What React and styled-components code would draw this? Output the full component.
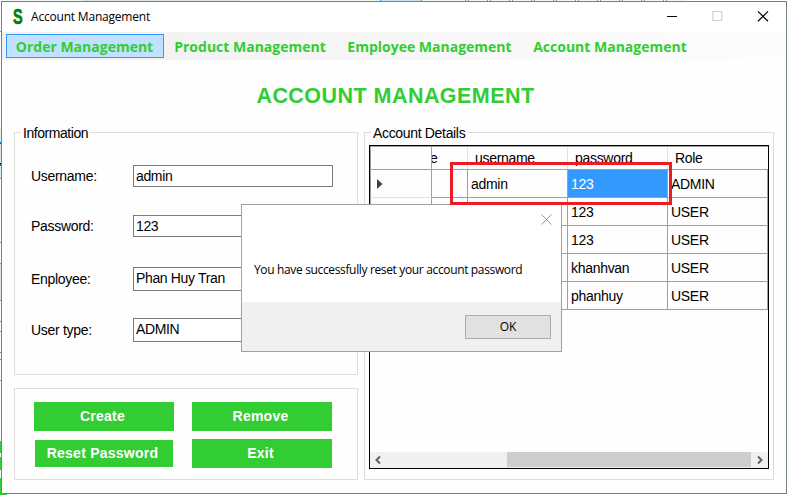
import React from 'react';
import styled, { createGlobalStyle } from 'styled-components';

const GREEN = '#32cd32';
const sans = '"Liberation Sans", Arial, sans-serif';
const humanist = '"Open Sans", "Noto Sans", sans-serif';

const GlobalStyle = createGlobalStyle`
  *, *::before, *::after { box-sizing: border-box; }
  body { margin: 0; background: #fff; color: #000; font: 14px/16px ${sans}; overflow: hidden; }
`;

/* Whatever is open behind the window shows as a one pixel rim. */
const Desktop = styled.div`
  width: 788px;
  height: 495px;
  padding: 1px;
  background:
    linear-gradient(90deg, #f4f8f4 0 82px, #dde3dd 82px 239px, #f1f6f1 239px 380px, #3c96dc 380px 381px, #cce4f7 381px 421px, #3c96dc 421px 422px, #f1f6f1 422px 465px, transparent 465px) 0 0 / 788px 1px no-repeat,
    repeating-linear-gradient(90deg, #8a938a 0 1px, #f1f6f1 1px 3px, #8a938a 3px 4px, #f1f6f1 4px 22px) 465px 0 / 220px 1px no-repeat,
    linear-gradient(${GREEN}, ${GREEN}) 0 494px / 7px 1px no-repeat,
    linear-gradient(180deg, #fff 0 31px, #8a938a 31px 32px, #fff 32px 129px, #e5e8e5 129px 142px, #0078d7 142px 144px, #e0e3e0 144px 163px, #000 163px 164px, #0078d7 164px 166px, #e5e8e5 166px 178px, #8a938a 178px 179px, #fff 179px 242px, #8a938a 242px 243px, #fff 243px 263px, #8a938a 263px 264px, #e0e3e0 264px 300px, #8a938a 300px 301px, #fff 301px 321px, #8a938a 321px 322px, #fff 322px 331px, #8a938a 331px 332px, #fff 332px 352px, #8a938a 352px 353px, #fff 353px 359px, #8a938a 359px 360px, #fff 360px 380px, #8a938a 380px 381px, #fff 381px 441px, ${GREEN} 441px 453px, #fff 453px 457px, ${GREEN} 457px 470px, #fff 470px 478px, ${GREEN} 478px) 0 0 / 1px 495px no-repeat,
    #fff;
`;

const Window = styled.main`
  position: relative;
  width: 786px;
  height: 493px;
  border: 1px solid #728572;
  background: #fefefe;
`;

const TitleBar = styled.header`
  display: flex;
  align-items: center;
  height: 30px;
  padding-left: 11px;
  background: #fff;
`;

const Logo = styled.span`
  width: 12px;
  height: 22px;
  margin-right: 6px;
  color: #008000;
  font: bold 22px/22px ${sans};
  -webkit-text-stroke: 0.6px #008000;
  transform: scaleX(0.66);
  transform-origin: 0 50%;
`;

const Caption = styled.span`
  flex: 1;
  font: 12px/16px ${humanist};
  letter-spacing: -0.2px;
`;

const WindowButtons = styled.div`
  display: flex;
  width: 137px;
  height: 30px;

  svg { width: 45.67px; height: 30px; }
`;

const MenuBar = styled.nav`
  display: flex;
  height: 28px;
  padding: 2px 0 2px 4px;
  background: linear-gradient(90deg, #f0f0f0, #fdfdfd);
`;

const MenuItem = styled.div`
  width: ${(p) => p.$width}px;
  padding-right: 1px;
  border: 1px solid ${(p) => (p.$active ? '#3399ff' : 'transparent')};
  background: ${(p) => (p.$active ? '#c2e0ff' : 'transparent')};
  color: ${GREEN};
  font: bold 14px/24px ${humanist};
  text-align: center;
  white-space: nowrap;
`;

const Heading = styled.h1`
  height: 72px;
  margin: 0;
  padding-left: 3px;
  color: ${GREEN};
  font: bold 21.5px/72px ${sans};
  letter-spacing: 0.46px;
  text-align: center;
`;

const Columns = styled.div`
  display: flex;
  gap: 6px;
  padding-left: 12px;
`;

const LeftColumn = styled.div`
  display: flex;
  flex-direction: column;
  gap: 13px;
`;

const Group = styled.section`
  position: relative;
  width: ${(p) => p.$width}px;
  height: ${(p) => p.$height}px;
  border: 1px solid #dcdcdc;
`;

const Legend = styled.span`
  position: absolute;
  top: -8px;
  left: 6px;
  padding: 0 2px;
  background: #fefefe;
  white-space: nowrap;
  letter-spacing: ${(p) => p.$track}px;
`;

const Form = styled.div`
  padding: 32px 0 0 16px;
`;

const Field = styled.label`
  display: flex;
  align-items: center;
  height: ${(p) => p.$height}px;
  margin-bottom: ${(p) => p.$after}px;
`;

const FieldName = styled.span`
  width: 102px;
  letter-spacing: -0.3px;
`;

const FieldValue = styled.span`
  width: 200px;
  height: 100%;
  padding-left: 2px;
  border: 1px solid #7a7a7a;
  background: #fff;
  line-height: 20px;
  letter-spacing: -0.35px;
`;

const Actions = styled.div`
  display: grid;
  grid-template: 29px 29px / 140px 140px;
  gap: 8px 18px;
  place-items: center;
  padding: 13px 0 0 19px;
`;

const ActionButton = styled.button`
  width: ${(p) => (p.$compact ? 138 : 140)}px;
  height: ${(p) => (p.$compact ? 27 : 29)}px;
  padding: 0 3px 1px 0;
  border: 0;
  background: ${GREEN};
  color: #fff;
  font: bold 14px/16px ${sans};
  letter-spacing: 0.25px;
`;

const Grid = styled.div`
  display: flex;
  flex-direction: column;
  width: 400px;
  height: 324px;
  margin: 12px 0 0 4px;
  border: 1px solid #000;
  background: #fefefe;
`;

const GridBody = styled.div`
  flex: 1;
`;

const GridRow = styled.div`
  display: grid;
  grid-template-columns: 62px 36px 100px 100px 100px;
  grid-template-rows: 100%;
  height: ${(p) => (p.$head ? 24 : 28)}px;
  border-top: ${(p) => (p.$head ? '1px solid #a0a0a0' : '0')};
`;

const RowHeader = styled.div`
  display: flex;
  align-items: center;
  padding: 1px 0 0 6px;
  border: solid #a0a0a0;
  border-width: 0 1px 1px;
  border-bottom-color: ${(p) => (p.$soft ? '#e2e2e2' : '#a0a0a0')};
`;

const HeadCell = styled.div`
  overflow: hidden;
  padding-left: 7px;
  border: solid #a0a0a0;
  border-width: 0 0 1px;
  background: ${(p) => (p.$last ? 'none' : 'linear-gradient(#e2e2e2, #e2e2e2) 100% 0 / 1px 100% no-repeat')};
  line-height: 22px;
  letter-spacing: -0.3px;
`;

const ClippedHead = styled(HeadCell)`
  padding: 0;
  text-indent: -2px;
`;

const Cell = styled.div`
  padding: 1px 0 0 3px;
  border: solid #a0a0a0;
  border-width: 0 1px 1px 0;
  background: ${(p) => (p.$selected ? '#3399ff' : '#fefefe')};
  color: ${(p) => (p.$selected ? '#fff' : '#000')};
  line-height: 26px;
  letter-spacing: -0.3px;
`;

const ScrollBar = styled.div`
  display: grid;
  grid-template-columns: 17px 120px 244px 17px;
  height: 16px;
  background: #f0f0f0;

  svg { width: 17px; height: 16px; }
`;

const Thumb = styled.div`
  grid-column: 3;
  height: 15px;
  background: #cdcdcd;
`;

const Dialog = styled.div`
  position: absolute;
  top: 202px;
  left: 239px;
  display: flex;
  flex-direction: column;
  width: 321px;
  height: 148px;
  border: 1px solid #a0a0a0;
  background: #fff;
`;

const DialogTop = styled.div`
  display: flex;
  justify-content: flex-end;
  height: 30px;
  padding: 9px 9px 0 0;

  svg { width: 11px; height: 11px; }
`;

const Message = styled.p`
  flex: 1;
  margin: 0;
  padding: 27px 0 0 12px;
  font: 12px/16px ${humanist};
  letter-spacing: -0.35px;
  white-space: nowrap;
`;

const DialogFooter = styled.div`
  display: flex;
  justify-content: flex-end;
  height: 49px;
  padding: 13px 10px 0 0;
  background: #f0f0f0;
`;

const OkButton = styled.button`
  width: 86px;
  height: 24px;
  padding: 0;
  border: 1px solid #adadad;
  background: #e1e1e1;
  color: #000;
  font: 12px/20px ${humanist};
`;

const Highlight = styled.div`
  position: absolute;
  top: 160px;
  left: 448px;
  width: 222px;
  height: 43px;
  border: 3px solid #ed1c24;
`;

const fields = [
  { name: 'Username:', value: 'admin', height: 22, after: 28 },
  { name: 'Password:', value: '123', height: 22, after: 30 },
  { name: 'Enployee:', value: 'Phan Huy Tran', height: 24, after: 27 },
  { name: 'User type:', value: 'ADMIN', height: 24, after: 0 },
];

const accounts = [
  ['admin', '123', 'ADMIN'],
  ['', '123', 'USER'],
  ['', '123', 'USER'],
  ['', 'khanhvan', 'USER'],
  ['', 'phanhuy', 'USER'],
];

export default function App() {
  return (
    <Desktop>
      <GlobalStyle />
      <Window>
        <TitleBar>
          <Logo>S</Logo>
          <Caption>Account Management</Caption>
          <WindowButtons>
            <svg viewBox="0 0 45.67 30"><path d="M18 14.5h10" stroke="#000" /></svg>
            <svg viewBox="0 0 45.67 30"><path d="M17.83 9.5h9v9h-9z" fill="none" stroke="#ccc" /></svg>
            <svg viewBox="0 0 45.67 30"><path d="M18 9.3l10 10m0-10l-10 10" stroke="#000" strokeWidth="1.2" /></svg>
          </WindowButtons>
        </TitleBar>
        <MenuBar>
          <MenuItem $width={158} $active>Order Management</MenuItem>
          <MenuItem $width={173}>Product Management</MenuItem>
          <MenuItem $width={186}>Employee Management</MenuItem>
          <MenuItem $width={175}>Account Management</MenuItem>
        </MenuBar>
        <Heading>ACCOUNT MANAGEMENT</Heading>
        <Columns>
          <LeftColumn>
            <Group $width={344} $height={243}>
              <Legend $track={-0.45}>Information</Legend>
              <Form>
                {fields.map((f) => (
                  <Field key={f.name} $height={f.height} $after={f.after}>
                    <FieldName>{f.name}</FieldName>
                    <FieldValue>{f.value}</FieldValue>
                  </Field>
                ))}
              </Form>
            </Group>
            <Group $width={344} $height={92}>
              <Actions>
                <ActionButton>Create</ActionButton>
                <ActionButton>Remove</ActionButton>
                <ActionButton $compact>Reset Password</ActionButton>
                <ActionButton>Exit</ActionButton>
              </Actions>
            </Group>
          </LeftColumn>
          <Group $width={410} $height={348}>
            <Legend $track={-0.33}>Account Details</Legend>
            <Grid>
              <GridBody>
                <GridRow $head>
                  <RowHeader />
                  <ClippedHead>e</ClippedHead>
                  <HeadCell>username</HeadCell>
                  <HeadCell>password</HeadCell>
                  <HeadCell $last>Role</HeadCell>
                </GridRow>
                {accounts.map(([user, password, role], i) => (
                  <GridRow key={i}>
                    <RowHeader $soft={i < accounts.length - 1}>
                      {i === 0 && (
                        <svg width="6" height="10" viewBox="0 0 6 10"><path d="M0 0l5.5 5L0 10z" fill="#404040" /></svg>
                      )}
                    </RowHeader>
                    <Cell />
                    <Cell>{user}</Cell>
                    <Cell $selected={i === 0}>{password}</Cell>
                    <Cell>{role}</Cell>
                  </GridRow>
                ))}
              </GridBody>
              <ScrollBar>
                <svg viewBox="0 0 17 16"><path d="M10 4.5L6.5 8l3.5 3.5" fill="none" stroke="#606060" strokeWidth="2" /></svg>
                <Thumb />
                <svg viewBox="0 0 17 16"><path d="M7 4.5L10.5 8 7 11.5" fill="none" stroke="#606060" strokeWidth="2" /></svg>
              </ScrollBar>
            </Grid>
          </Group>
        </Columns>
        <Dialog>
          <DialogTop>
            <svg viewBox="0 0 11 11"><path d="M.5 .5l10 10m0-10l-10 10" stroke="#999" /></svg>
          </DialogTop>
          <Message>You have successfully reset your account password</Message>
          <DialogFooter>
            <OkButton>OK</OkButton>
          </DialogFooter>
        </Dialog>
        <Highlight />
      </Window>
    </Desktop>
  );
}
